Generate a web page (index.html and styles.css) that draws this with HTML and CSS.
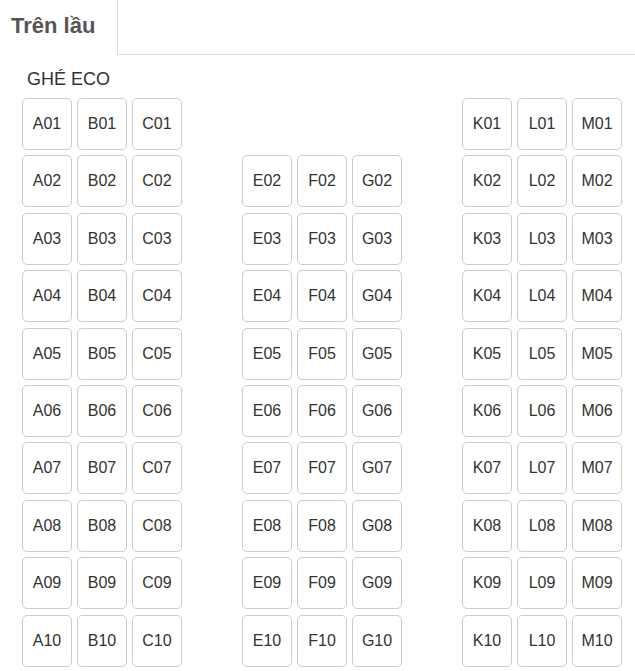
FILE: index.html
```html
<!DOCTYPE html>
<html>
<head>
  <meta charset="utf-8">
  <link rel="stylesheet" href="styles.css">
</head>
<body>
  <div class="tabs">
    <div class="tab active">Trên lầu</div>
    <div class="tab-rest"></div>
  </div>

  <div class="deck">
    <div class="deck-title">GHÉ ECO</div>
    <div class="seat-map">
      <div class="seat">A01</div><div class="seat">B01</div><div class="seat">C01</div>
      <div class="aisle"></div><div class="aisle"></div><div class="aisle"></div><div class="aisle"></div><div class="aisle"></div>
      <div class="seat">K01</div><div class="seat">L01</div><div class="seat">M01</div>

      <div class="seat">A02</div><div class="seat">B02</div><div class="seat">C02</div><div class="aisle"></div>
      <div class="seat">E02</div><div class="seat">F02</div><div class="seat">G02</div><div class="aisle"></div>
      <div class="seat">K02</div><div class="seat">L02</div><div class="seat">M02</div>

      <div class="seat">A03</div><div class="seat">B03</div><div class="seat">C03</div><div class="aisle"></div>
      <div class="seat">E03</div><div class="seat">F03</div><div class="seat">G03</div><div class="aisle"></div>
      <div class="seat">K03</div><div class="seat">L03</div><div class="seat">M03</div>

      <div class="seat">A04</div><div class="seat">B04</div><div class="seat">C04</div><div class="aisle"></div>
      <div class="seat">E04</div><div class="seat">F04</div><div class="seat">G04</div><div class="aisle"></div>
      <div class="seat">K04</div><div class="seat">L04</div><div class="seat">M04</div>

      <div class="seat">A05</div><div class="seat">B05</div><div class="seat">C05</div><div class="aisle"></div>
      <div class="seat">E05</div><div class="seat">F05</div><div class="seat">G05</div><div class="aisle"></div>
      <div class="seat">K05</div><div class="seat">L05</div><div class="seat">M05</div>

      <div class="seat">A06</div><div class="seat">B06</div><div class="seat">C06</div><div class="aisle"></div>
      <div class="seat">E06</div><div class="seat">F06</div><div class="seat">G06</div><div class="aisle"></div>
      <div class="seat">K06</div><div class="seat">L06</div><div class="seat">M06</div>

      <div class="seat">A07</div><div class="seat">B07</div><div class="seat">C07</div><div class="aisle"></div>
      <div class="seat">E07</div><div class="seat">F07</div><div class="seat">G07</div><div class="aisle"></div>
      <div class="seat">K07</div><div class="seat">L07</div><div class="seat">M07</div>

      <div class="seat">A08</div><div class="seat">B08</div><div class="seat">C08</div><div class="aisle"></div>
      <div class="seat">E08</div><div class="seat">F08</div><div class="seat">G08</div><div class="aisle"></div>
      <div class="seat">K08</div><div class="seat">L08</div><div class="seat">M08</div>

      <div class="seat">A09</div><div class="seat">B09</div><div class="seat">C09</div><div class="aisle"></div>
      <div class="seat">E09</div><div class="seat">F09</div><div class="seat">G09</div><div class="aisle"></div>
      <div class="seat">K09</div><div class="seat">L09</div><div class="seat">M09</div>

      <div class="seat">A10</div><div class="seat">B10</div><div class="seat">C10</div><div class="aisle"></div>
      <div class="seat">E10</div><div class="seat">F10</div><div class="seat">G10</div><div class="aisle"></div>
      <div class="seat">K10</div><div class="seat">L10</div><div class="seat">M10</div>
    </div>
  </div>
</body>
</html>
```

FILE: styles.css
```css
body {
  margin: 0;
  background: #fff;
  font-family: 'Liberation Sans', Arial, sans-serif;
  color: #333;
}

.tabs {
  display: flex;
  height: 55px;
}

.tab {
  box-sizing: border-box;
  width: 118px;
  padding: 13px 0 0 11px;
  border-right: 1px solid #ddd;
  font-size: 22px;
  font-weight: bold;
  color: #555;
}

.tab-rest {
  flex: 1;
  border-bottom: 1px solid #ddd;
}

.deck {
  padding: 0 13px 0 22px;
}

.deck-title {
  margin: 14px 0 9px 5px;
  font-size: 18px;
  line-height: 20px;
  color: #333;
}

.seat-map {
  display: grid;
  grid-template-columns: repeat(11, 50px);
  grid-auto-rows: 52px;
  column-gap: 5px;
  row-gap: 5.4px;
}

.seat {
  box-sizing: border-box;
  display: flex;
  align-items: center;
  justify-content: center;
  border: 1px solid #ccc;
  border-radius: 5px;
  font-size: 16px;
  color: #333;
}
```
